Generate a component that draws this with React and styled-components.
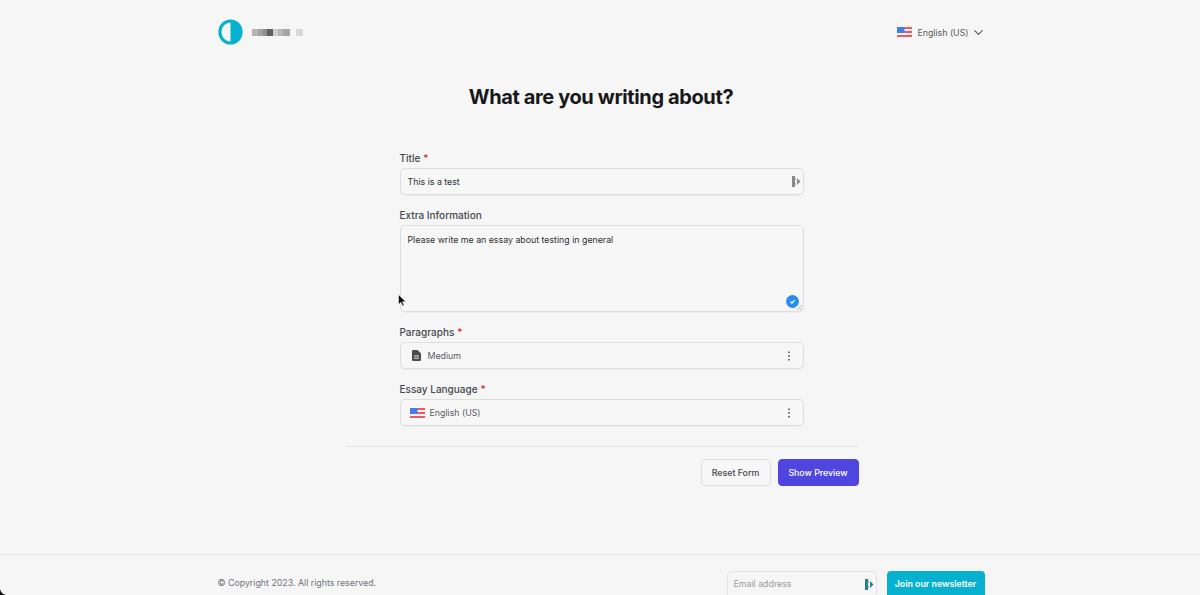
import React from 'react';
import styled, { createGlobalStyle } from 'styled-components';
import { FiChevronDown } from 'react-icons/fi';

const GlobalStyle = createGlobalStyle`
  html, body {
    margin: 0;
    padding: 0;
    height: 100%;
    overflow: hidden;
    background: #f6f6f6;
  }
  * {
    box-sizing: border-box;
  }
`;

const Page = styled.div`
  position: relative;
  display: flex;
  flex-direction: column;
  align-items: center;
  width: 1200px;
  height: 595px;
  overflow: hidden;
  background: #f6f6f6;
  font-family: 'Inter', sans-serif;
  color: #3f3f46;
`;

const Header = styled.header`
  display: flex;
  align-items: center;
  justify-content: space-between;
  width: 767px;
  height: 64px;
  margin-left: 2px;
`;

const Brand = styled.div`
  display: flex;
  align-items: center;
  gap: 9px;
`;

const BlurWord = styled.div`
  display: flex;
  margin-right: -3px;
`;

const BlurBlock = styled.span`
  width: ${(p) => p.$w}px;
  height: 7px;
  background: ${(p) => p.$c};
`;

const LangPicker = styled.div`
  display: flex;
  align-items: center;
  gap: 5px;
  font-size: 8.8px;
  color: #5a5a62;
  margin-right: -1px;
`;

const Chevron = styled(FiChevronDown)`
  margin-left: -3px;
  color: #55555c;
`;

const Heading = styled.h1`
  margin: 0;
  margin-top: 18px;
  font-size: 20px;
  line-height: 30px;
  font-weight: 700;
  letter-spacing: -0.38px;
  color: #18181b;
  margin-left: 2px;
`;

const Form = styled.form`
  display: flex;
  flex-direction: column;
  gap: 12px;
  width: 404px;
  margin-top: 38px;
  margin-left: 3px;
`;

const Field = styled.div`
  display: flex;
  flex-direction: column;
  gap: 2px;
`;

const Label = styled.label`
  font-size: 10px;
  line-height: 16px;
  font-weight: 500;
  color: #46464d;
  height: 16px;
`;

const Star = styled.span`
  color: #e11d2e;
  margin-left: 3px;
`;

const Box = styled.div`
  position: relative;
  display: flex;
  align-items: ${(p) => (p.$tall ? 'flex-start' : 'center')};
  gap: ${(p) => (p.$select ? 5 : 0)}px;
  height: ${(p) => (p.$tall ? 87 : 27)}px;
  padding: ${(p) => (p.$tall ? '7px' : p.$select ? '0 11px 0 9px' : '0 7px')};
  background: #f7f7f7;
  border: 1px solid #dedede;
  border-radius: 5px;
  box-shadow: 0 1px 1px rgba(0, 0, 0, 0.04);
  font-size: 8.8px;
  line-height: 14px;
  color: #2f2f33;
`;

const SelectText = styled.span`
  flex: 1;
  color: #5a5a62;
`;

const BadgeIcon = styled.svg`
  position: absolute;
  right: 2px;
  top: 7px;
`;

const CheckBadge = styled.div`
  position: absolute;
  right: 4px;
  bottom: 3px;
  display: flex;
  align-items: center;
  justify-content: center;
  width: 13px;
  height: 13px;
  border-radius: 50%;
  background: #2b8def;
`;

const ResizeGrip = styled.svg`
  position: absolute;
  right: 0;
  bottom: 0;
`;

const Actions = styled.div`
  display: flex;
  justify-content: flex-end;
  gap: 7px;
  width: 514px;
  margin-top: 20px;
  margin-left: 3px;
  padding-top: 12px;
  border-top: 1px solid #e4e4e4;
`;

const Button = styled.button`
  height: 27px;
  padding: 0;
  width: ${(p) => p.$w}px;
  border-radius: 4px;
  border: 1px solid ${(p) => (p.$primary ? '#4f46e5' : '#dedede')};
  background: ${(p) => (p.$primary ? '#4f46e0' : '#f7f7f7')};
  color: ${(p) => (p.$primary ? '#ffffff' : '#46464d')};
  font-family: 'Inter', sans-serif;
  font-size: 8.8px;
  font-weight: 500;
`;

const Footer = styled.footer`
  display: flex;
  justify-content: center;
  width: 100%;
  height: 41px;
  margin-top: auto;
  border-top: 1px solid #e5e5e5;
`;

const FooterInner = styled.div`
  display: flex;
  align-items: flex-start;
  justify-content: space-between;
  width: 767px;
  padding-top: 16px;
  margin-left: 2px;
`;

const Copyright = styled.span`
  font-size: 8.8px;
  line-height: 24px;
  color: #71717a;
`;

const Newsletter = styled.div`
  display: flex;
  gap: 10px;
`;

const EmailBox = styled.div`
  position: relative;
  display: flex;
  align-items: center;
  width: 150px;
  height: 24px;
  padding: 0 6px;
  border: 1px solid #e2e2e2;
  border-bottom: none;
  border-radius: 5px 5px 0 0;
  font-size: 8.8px;
  color: #9a9aa0;
`;

const JoinButton = styled.button`
  width: 98px;
  height: 24px;
  padding: 0;
  border: none;
  border-radius: 4px 4px 0 0;
  background: #06b0cf;
  color: #ffffff;
  font-family: 'Inter', sans-serif;
  font-size: 8.8px;
  font-weight: 600;
`;

const Cursor = styled.svg`
  position: absolute;
  left: 398px;
  top: 294px;
`;

const WindowCorner = styled.svg`
  position: absolute;
  left: 0;
  bottom: 0;
`;

const Logo = () => (
  <svg width="25" height="26" viewBox="0 0 26 26" preserveAspectRatio="none">
    <circle cx="13" cy="13" r="11" fill="none" stroke="#06b0cf" strokeWidth="3.2" />
    <path d="M13 2a11 11 0 0 1 0 22z" fill="#06b0cf" />
  </svg>
);

const Flag = () => (
  <svg width="15" height="10" viewBox="0 0 15 10">
    <rect width="15" height="10" fill="#f6f0f0" />
    <rect y="0" width="15" height="2" fill="#ee5a63" />
    <rect y="4" width="15" height="2" fill="#ee5a63" />
    <rect y="8" width="15" height="2" fill="#ee5a63" />
    <rect width="7.5" height="6" fill="#3f7fe6" />
  </svg>
);

const DocIcon = () => (
  <svg width="9" height="11" viewBox="0 0 9 11" style={{ marginLeft: 2, marginRight: 2 }}>
    <path
      d="M1.2 0H5.6L9 3.4V9.8A1.2 1.2 0 0 1 7.8 11H1.2A1.2 1.2 0 0 1 0 9.8V1.2A1.2 1.2 0 0 1 1.2 0z"
      fill="#4a4a4f"
    />
    <path d="M2 6h5M2 8.2h5" stroke="#f7f7f7" strokeWidth="0.9" />
  </svg>
);

const BarIcon = ({ color = '#8a8a8a' }) => (
  <BadgeIcon width="9" height="11" viewBox="0 0 9 11">
    <rect x="0" y="0" width="3" height="11" fill={color} />
    <rect x="3" y="2" width="1" height="2" fill={color} opacity="0.5" />
    <rect x="3" y="7" width="1" height="2" fill={color} opacity="0.5" />
    <path d="M5 2l3.5 3.5L5 9z" fill={color} />
  </BadgeIcon>
);

const Dots = () => (
  <svg width="6" height="12" viewBox="0 0 6 12">
    <circle cx="3" cy="2.2" r="1" fill="#6a6a6a" />
    <circle cx="3" cy="6" r="1" fill="#6a6a6a" />
    <circle cx="3" cy="9.8" r="1" fill="#6a6a6a" />
  </svg>
);

const blocks = [
  [6, '#b5b5b5'],
  [5, '#a3a3a3'],
  [4, '#8f8f8f'],
  [6, '#5f5f5f'],
  [5, '#cfcfcf'],
  [5, '#b8b8b8'],
  [7, '#a5a5a5'],
];

export default function App() {
  return (
    <Page>
      <GlobalStyle />
      <Header>
        <Brand>
          <Logo />
          <BlurWord>
            {blocks.map(([w, c], i) => (
              <BlurBlock key={i} $w={w} $c={c} />
            ))}
          </BlurWord>
          <BlurBlock $w={7} $c="#d8d8d8" />
        </Brand>
        <LangPicker>
          <Flag />
          <span>English (US)</span>
          <Chevron size={15} strokeWidth={1.7} />
        </LangPicker>
      </Header>

      <Heading>What are you writing about?</Heading>

      <Form>
        <Field>
          <Label>
            Title<Star>*</Star>
          </Label>
          <Box>
            This is a test
            <BarIcon />
          </Box>
        </Field>
        <Field>
          <Label>Extra Information</Label>
          <Box $tall>
            Please write me an essay about testing in general
            <CheckBadge>
              <svg width="7" height="7" viewBox="0 0 10 10">
                <path d="M2 5.2l2.2 2.2L8.2 3" fill="none" stroke="#fff" strokeWidth="1.8" />
              </svg>
            </CheckBadge>
            <ResizeGrip width="7" height="7" viewBox="0 0 7 7">
              <path d="M1 6l5-5M4 6l2-2" stroke="#aaa" strokeWidth="0.8" />
            </ResizeGrip>
          </Box>
        </Field>
        <Field>
          <Label>
            Paragraphs<Star>*</Star>
          </Label>
          <Box $select>
            <DocIcon />
            <SelectText>Medium</SelectText>
            <Dots />
          </Box>
        </Field>
        <Field>
          <Label>
            Essay Language<Star>*</Star>
          </Label>
          <Box $select>
            <Flag />
            <SelectText>English (US)</SelectText>
            <Dots />
          </Box>
        </Field>
      </Form>

      <Actions>
        <Button type="button" $w={70}>Reset Form</Button>
        <Button type="button" $primary $w={81}>Show Preview</Button>
      </Actions>

      <Footer>
        <FooterInner>
          <Copyright>© Copyright 2023. All rights reserved.</Copyright>
          <Newsletter>
            <EmailBox>
              Email address
              <BarIcon color="#2a7f95" />
            </EmailBox>
            <JoinButton type="button">Join our newsletter</JoinButton>
          </Newsletter>
        </FooterInner>
      </Footer>

      <Cursor width="9" height="13" viewBox="0 0 9 13">
        <path d="M0.5 0.5v10l2.4-2.2 1.6 3.6 1.6-.7-1.6-3.5h3.2z" fill="#111" stroke="#fff" strokeWidth="0.5" />
      </Cursor>
      <WindowCorner width="6" height="6" viewBox="0 0 6 6">
        <path d="M0 0Q1 5 6 6H0z" fill="#111" />
      </WindowCorner>
    </Page>
  );
}
